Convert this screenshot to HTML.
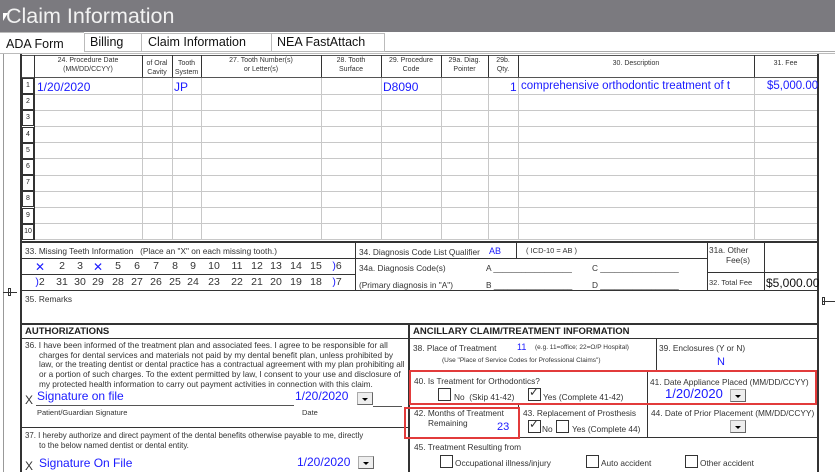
<!DOCTYPE html><html><head><style>
*{margin:0;padding:0;box-sizing:border-box}
body{width:835px;height:472px;overflow:hidden;background:#fff;font-family:"Liberation Sans",Arial,sans-serif;position:relative;color:#222}
.a{position:absolute}
.h{position:absolute;height:1px;background:#333}
.v{position:absolute;width:1px;background:#333}
.lh{position:absolute;height:1px;background:#c8c8c8}
.lv{position:absolute;width:1px;background:#c8c8c8}
.s{font-size:7px;color:#333;text-align:center;line-height:9px}
.t{font-size:8.3px;color:#333;white-space:nowrap}
.b{color:#1a1aff}
.n{position:absolute;width:24px;text-align:center;font-size:10.5px;color:#333;white-space:nowrap}
.cb{position:absolute;width:13px;height:13px;border:1px solid #333;background:#fff}
.dd{position:absolute;width:16px;height:13px;background:#eee;border:1px solid #aaa;border-right-color:#666;border-bottom-color:#666}
.dd:after{content:"";position:absolute;left:4px;top:5px;border-left:3px solid transparent;border-right:3px solid transparent;border-top:3px solid #000}
.red{position:absolute;border:2px solid #e23b3b}
</style></head><body>
<div class="a" style="left:0;top:0;width:835px;height:32px;background:#7b7a7f"></div>
<div class="a" style="left:6px;top:4px;font-size:21.5px;color:#f2f2f2">Claim Information</div>
<div class="a" style="left:3px;top:13px;width:0;height:0;border-left:5px solid #fff;border-bottom:8px solid transparent"></div>
<!-- tabs -->
<div class="a" style="left:0;top:32px;width:835px;height:21px;background:#fff"></div>
<div class="a" style="left:84px;top:33px;width:58px;height:19px;border:1px solid #bbb"></div>
<div class="a" style="left:141px;top:33px;width:131px;height:19px;border:1px solid #bbb"></div>
<div class="a" style="left:271px;top:33px;width:114px;height:19px;border:1px solid #bbb"></div>
<div class="a" style="left:0;top:32px;width:84px;height:1px;background:#bbb"></div>
<div class="a t" style="left:6px;top:37px;font-size:12.5px;color:#111">ADA Form</div>
<div class="a t" style="left:90px;top:35px;font-size:12.5px;color:#111">Billing</div>
<div class="a t" style="left:148px;top:35px;font-size:12.5px;color:#111">Claim Information</div>
<div class="a t" style="left:277px;top:35px;font-size:12.5px;color:#111">NEA FastAttach</div>
<div class="a" style="left:385px;top:51px;width:450px;height:1px;background:#aaa"></div>
<div class="a" style="left:0;top:53px;width:835px;height:1px;background:#bbb"></div>
<!-- frame -->
<div class="v" style="left:3px;top:54px;height:418px;background:#999"></div>
<div class="v" style="left:20px;top:54px;height:418px;width:2px;background:#333"></div>
<div class="v" style="left:817px;top:54px;height:418px;width:2px;background:#333"></div>
<div class="a" style="left:3px;top:292px;width:14px;height:1px;background:#333"></div>
<div class="a" style="left:8px;top:288px;width:3px;height:8px;border:1px solid #333"></div>
<div class="a" style="left:822px;top:301px;width:13px;height:1px;background:#333"></div>
<div class="a" style="left:822px;top:297px;width:3px;height:8px;border:1px solid #333"></div>
<!-- header -->
<div class="h" style="left:22px;top:55px;width:795px;background:#555"></div>
<div class="h" style="left:22px;top:77px;width:795px;background:#555"></div>
<div class="v" style="left:34px;top:55px;height:185px"></div>
<div class="v" style="left:142px;top:55px;height:22px"></div>
<div class="v" style="left:172px;top:55px;height:22px"></div>
<div class="v" style="left:201px;top:55px;height:22px"></div>
<div class="v" style="left:321px;top:55px;height:22px"></div>
<div class="v" style="left:381px;top:55px;height:22px"></div>
<div class="v" style="left:441px;top:55px;height:22px"></div>
<div class="v" style="left:488px;top:55px;height:22px"></div>
<div class="v" style="left:518px;top:55px;height:22px"></div>
<div class="v" style="left:754px;top:55px;height:22px"></div>
<div class="lv" style="left:142px;top:78px;height:162px"></div>
<div class="lv" style="left:172px;top:78px;height:162px"></div>
<div class="lv" style="left:201px;top:78px;height:162px"></div>
<div class="lv" style="left:321px;top:78px;height:162px"></div>
<div class="lv" style="left:381px;top:78px;height:162px"></div>
<div class="lv" style="left:441px;top:78px;height:162px"></div>
<div class="lv" style="left:488px;top:78px;height:162px"></div>
<div class="lv" style="left:518px;top:78px;height:162px"></div>
<div class="lv" style="left:754px;top:78px;height:162px"></div>
<div class="a s" style="left:34px;top:56px;width:108px">24. Procedure Date<br>(MM/DD/CCYY)</div>
<div class="a s" style="left:142px;top:59px;width:30px">of Oral<br>Cavity</div>
<div class="a s" style="left:172px;top:59px;width:29px">Tooth<br>System</div>
<div class="a s" style="left:201px;top:56px;width:120px">27. Tooth Number(s)<br>or Letter(s)</div>
<div class="a s" style="left:321px;top:56px;width:60px">28. Tooth<br>Surface</div>
<div class="a s" style="left:381px;top:56px;width:60px">29. Procedure<br>Code</div>
<div class="a s" style="left:441px;top:56px;width:47px">29a. Diag.<br>Pointer</div>
<div class="a s" style="left:488px;top:56px;width:30px">29b.<br>Qty.</div>
<div class="a s" style="left:518px;top:59px;width:236px">30. Description</div>
<div class="a s" style="left:754px;top:59px;width:63px">31. Fee</div>
<!-- rows -->
<div id="rows"></div>
<script>
(function(){
var r=document.getElementById('rows'),h='';
for(var i=0;i<10;i++){var y=78+i*16.2;
h+='<div class="a" style="left:22px;top:'+y+'px;width:12px;height:16px;border:1px solid #333;font-size:7px;text-align:center;line-height:14px">'+(i+1)+'</div>';
h+='<div class="lh" style="left:35px;top:'+(y+15.5)+'px;width:782px"></div>';}
var cx=[40,62,80,98,118,137,156,175,193,214,237,257,276,296,316,337];
var tp=['<span class="b" style="font-size:12px">✕</span>','2','3','<span class="b" style="font-size:12px">✕</span>','5','6','7','8','9','10','11','12','13','14','15','<span class="b">)</span>6'];
var bt=['<span class="b">)</span>2','31','30','29','28','27','26','25','24','23','22','21','20','19','18','<span class="b">)</span>7'];
for(var j=0;j<16;j++){h+='<div class="n" style="left:'+(cx[j]-12)+'px;top:260px">'+tp[j]+'</div>';
h+='<div class="n" style="left:'+(cx[j]-12)+'px;top:276px">'+bt[j]+'</div>';}
r.innerHTML=h;
})();
</script>
<div class="a t b" style="left:37px;top:80px;font-size:12px">1/20/2020</div>
<div class="a t b" style="left:174px;top:80px;font-size:12px">JP</div>
<div class="a t b" style="left:383px;top:80px;font-size:12px">D8090</div>
<div class="a t b" style="left:510px;top:80px;font-size:12px">1</div>
<div class="a t b" style="left:521px;top:80px;font-size:11.5px">comprehensive orthodontic treatment of t</div>
<div class="a t b" style="left:767px;top:80px;font-size:11.5px">$5,000.00</div>
<!-- missing teeth -->
<div class="h" style="left:22px;top:241px;width:795px;height:2px"></div>
<div class="h" style="left:22px;top:258px;width:333px"></div>
<div class="h" style="left:22px;top:274px;width:333px"></div>
<div class="v" style="left:355px;top:242px;height:48px"></div>
<div class="v" style="left:516px;top:242px;height:16px"></div>
<div class="h" style="left:355px;top:258px;width:352px"></div>
<div class="v" style="left:707px;top:242px;height:48px"></div>
<div class="h" style="left:707px;top:272px;width:111px"></div>
<div class="v" style="left:764px;top:242px;height:48px"></div>
<div class="h" style="left:22px;top:290px;width:795px"></div>
<div class="a t" style="left:25px;top:246px">33. Missing Teeth Information &nbsp;&nbsp;(Place an "X" on each missing tooth.)</div>
<div class="a t" style="left:359px;top:247px">34. Diagnosis Code List Qualifier</div>
<div class="a t b" style="left:489px;top:246px;font-size:9px">AB</div>
<div class="a t" style="left:526px;top:246px;font-size:7.5px">( ICD-10 = AB )</div>
<div class="a t" style="left:359px;top:263px">34a. Diagnosis Code(s)</div>
<div class="a t" style="left:359px;top:280px">(Primary diagnosis in "A")</div>
<div class="a t" style="left:486px;top:263px">A _________________</div>
<div class="a t" style="left:592px;top:263px">C _________________</div>
<div class="a t" style="left:486px;top:280px">B _________________</div>
<div class="a t" style="left:592px;top:280px">D _________________</div>
<div class="a t" style="left:709px;top:245px">31a. Other</div>
<div class="a t" style="left:726px;top:255px">Fee(s)</div>
<div class="a t" style="left:709px;top:278px;font-size:7.5px">32. Total Fee</div>
<div class="a t" style="left:766px;top:276px;font-size:12px;color:#111">$5,000.00</div>
<div class="a t" style="left:25px;top:294px">35. Remarks</div>
<!-- authorizations -->
<div class="h" style="left:22px;top:323px;width:795px;height:2px"></div>
<div class="h" style="left:22px;top:338px;width:795px"></div>
<div class="v" style="left:408px;top:324px;height:148px;width:2px"></div>
<div class="a" style="left:25px;top:326px;font-size:9.5px;font-weight:bold;color:#222">AUTHORIZATIONS</div>
<div class="a" style="left:413px;top:326px;font-size:9.5px;font-weight:bold;color:#222">ANCILLARY CLAIM/TREATMENT INFORMATION</div>
<div class="a" style="left:25px;top:341px;width:381px;font-size:8.25px;line-height:9.7px;color:#333;padding-left:14px;text-indent:-14px">36. I have been informed of the treatment plan and associated fees. I agree to be responsible for all charges for dental services and materials not paid by my dental benefit plan, unless prohibited by law, or the treating dentist or dental practice has a contractual agreement with my plan prohibiting all or a portion of such charges. To the extent permitted by law, I consent to your use and disclosure of my protected health information to carry out payment activities in connection with this claim.</div>
<div class="a t" style="left:25px;top:393px;font-size:12px">X</div>
<div class="a t b" style="left:37px;top:389px;font-size:12px">Signature on file</div>
<div class="a" style="left:36px;top:405px;width:258px;height:1px;background:#555"></div>
<div class="a t b" style="left:295px;top:389px;font-size:12px">1/20/2020</div>
<div class="dd" style="left:357px;top:392px"></div>
<div class="a" style="left:373px;top:406px;width:29px;height:1px;background:#555"></div>
<div class="a t" style="left:37px;top:408px;font-size:7.5px">Patient/Guardian Signature</div>
<div class="a t" style="left:302px;top:408px;font-size:7.5px">Date</div>
<div class="h" style="left:22px;top:427px;width:387px"></div>
<div class="a t" style="left:25px;top:431px;font-size:7.9px">37. I hereby authorize and direct payment of the dental benefits otherwise payable to me, directly</div>
<div class="a t" style="left:39px;top:441px;font-size:7.9px">to the below named dentist or dental entity.</div>
<div class="a t" style="left:25px;top:459px;font-size:12px">X</div>
<div class="a t b" style="left:39px;top:456px;font-size:12px">Signature On File</div>
<div class="a t b" style="left:297px;top:455px;font-size:12px">1/20/2020</div>
<div class="dd" style="left:358px;top:456px"></div>
<!-- right side -->
<div class="v" style="left:656px;top:338px;height:32px"></div>
<div class="h" style="left:409px;top:370px;width:408px"></div>
<div class="a t" style="left:413px;top:343px">38. Place of Treatment</div>
<div class="a t b" style="left:517px;top:342px;font-size:9px">11</div>
<div class="a t" style="left:535px;top:344px;font-size:6.5px">(e.g. 11=office; 22=O/P Hospital)</div>
<div class="a t" style="left:442px;top:357px;font-size:6.5px">(Use "Place of Service Codes for Professional Claims")</div>
<div class="a t" style="left:659px;top:343px">39. Enclosures (Y or N)</div>
<div class="a t b" style="left:717px;top:356px;font-size:11px">N</div>
<div class="v" style="left:647px;top:370px;height:67px"></div>
<div class="h" style="left:409px;top:404px;width:408px"></div>
<div class="v" style="left:518px;top:404px;height:33px"></div>
<div class="h" style="left:409px;top:437px;width:408px"></div>
<div class="a t" style="left:414px;top:376px">40. Is Treatment for Orthodontics?</div>
<div class="cb" style="left:438px;top:388px"></div>
<div class="a t" style="left:454px;top:392px">No &nbsp;(Skip 41-42)</div>
<div class="cb" style="left:528px;top:388px"></div>
<div class="a t" style="left:529px;top:385px;font-size:12px">✓</div>
<div class="a t" style="left:543px;top:392px">Yes (Complete 41-42)</div>
<div class="a t" style="left:650px;top:377px">41. Date Appliance Placed (MM/DD/CCYY)</div>
<div class="a t b" style="left:665px;top:386px;font-size:13px">1/20/2020</div>
<div class="dd" style="left:730px;top:389px"></div>
<div class="a t" style="left:414px;top:408px">42. Months of Treatment</div>
<div class="a t" style="left:428px;top:418px">Remaining</div>
<div class="a t b" style="left:497px;top:421px;font-size:11px">23</div>
<div class="a t" style="left:523px;top:408px">43. Replacement of Prosthesis</div>
<div class="cb" style="left:528px;top:420px"></div>
<div class="a t" style="left:529px;top:417px;font-size:12px">✓</div>
<div class="a t" style="left:542px;top:424px">No</div>
<div class="cb" style="left:556px;top:420px"></div>
<div class="a t" style="left:572px;top:424px">Yes (Complete 44)</div>
<div class="a t" style="left:651px;top:408px">44. Date of Prior Placement (MM/DD/CCYY)</div>
<div class="dd" style="left:730px;top:420px"></div>
<div class="a t" style="left:414px;top:442px">45. Treatment Resulting from</div>
<div class="cb" style="left:440px;top:455px"></div>
<div class="a t" style="left:455px;top:458px">Occupational illness/injury</div>
<div class="cb" style="left:586px;top:455px"></div>
<div class="a t" style="left:601px;top:458px">Auto accident</div>
<div class="cb" style="left:685px;top:455px"></div>
<div class="a t" style="left:700px;top:458px">Other accident</div>
<!-- red boxes -->
<div class="red" style="left:409px;top:370px;width:408px;height:35px"></div>
<div class="red" style="left:404px;top:407px;width:116px;height:32px"></div>
</body></html>
